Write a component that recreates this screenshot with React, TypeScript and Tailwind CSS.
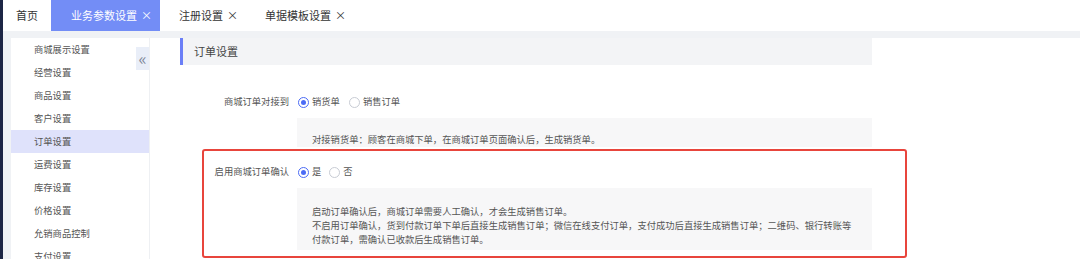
import React from 'react';

const menus = ['商城展示设置', '经营设置', '商品设置', '客户设置', '订单设置', '运费设置', '库存设置', '价格设置', '允销商品控制', '支付设置'];

const Radio: React.FC<{ checked?: boolean; label: string }> = ({ checked, label }) => (
  <span className="flex items-center gap-[3px]">
    <span
      className={`w-[11px] h-[11px] rounded-full flex items-center justify-center bg-white ${
        checked ? 'border-[1.5px] border-[#4b6bf5]' : 'border border-[#c8ccd4]'
      }`}
    >
      {checked && <span className="w-[5px] h-[5px] rounded-full bg-[#4b6bf5]" />}
    </span>
    <span className="text-[#555]">{label}</span>
  </span>
);

const App: React.FC = () => {
  return (
    <div
      className="w-[1080px] h-[259px] overflow-hidden flex bg-white"
      style={{ fontFamily: '"Noto Sans CJK SC", "Noto Sans", sans-serif' }}
    >
      <div className="w-[3px] bg-[#1d2645]" />
      <div className="flex-1 flex flex-col">
        {/* tabs */}
        <div className="h-[31px] flex items-stretch bg-white text-[11px] text-[#333] leading-none">
          <div className="px-[13px] flex items-center">首页</div>
          <div className="pl-[20px] pr-[8px] flex items-center gap-[4px] bg-[#738df6] text-white">
            <span>业务参数设置</span>
            <span className="text-[11px]">×</span>
          </div>
          <div className="pl-[19px] pr-[8px] flex items-center gap-[4px]">
            <span>注册设置</span>
            <span className="text-[11px]">×</span>
          </div>
          <div className="pl-[19px] pr-[8px] flex items-center gap-[4px]">
            <span>单据模板设置</span>
            <span className="text-[11px]">×</span>
          </div>
        </div>

        <div className="flex-1 bg-[#f0f2f5] pt-[7px] pl-[8px] flex min-h-0">
          {/* sidebar */}
          <div className="w-[139px] bg-white relative border-r border-[#eef0f3]">
            {menus.map((m) => (
              <div
                key={m}
                className={`h-[23px] pl-[23px] flex items-center text-[9.3px] text-[#555] ${
                  m === '订单设置' ? 'bg-[#dfe2fb]' : ''
                }`}
              >
                {m}
              </div>
            ))}
            <div className="absolute right-0 top-[9px] w-[13px] h-[23px] bg-[#e9eef8] flex items-center justify-center text-[#7d8699] text-[17px] leading-none pb-[2px]">
              «
            </div>
          </div>

          {/* main */}
          <div className="flex-1 bg-white relative flex flex-col text-[9.3px]">
            <div className="ml-[30px] w-[692px] h-[27px] bg-[#f3f4f6] border-l-[3px] border-[#6b7ff7] flex items-center pl-[11px] text-[11px] text-[#444]">
              订单设置
            </div>

            <div className="mt-[26px] h-[22px] flex items-center">
              <div className="w-[139px] text-right text-[#555]">商城订单对接到</div>
              <div className="ml-[9px] flex items-center gap-[9px]">
                <Radio checked label="销货单" />
                <Radio label="销售订单" />
              </div>
            </div>
            <div className="mt-[5px] ml-[147px] w-[575px] bg-[#f7f7f8] pt-[14px] pb-[1px] pl-[15px] leading-[14px] text-[#555]">
              对接销货单：顾客在商城下单，在商城订单页面确认后，生成销货单。
            </div>

            <div className="mt-[14px] h-[22px] flex items-center">
              <div className="w-[139px] text-right text-[#555]">启用商城订单确认</div>
              <div className="ml-[9px] flex items-center gap-[8px]">
                <Radio checked label="是" />
                <Radio label="否" />
              </div>
            </div>
            <div className="mt-[5px] ml-[147px] w-[575px] bg-[#f7f7f8] pt-[16px] pb-[4px] pl-[15px] leading-[14px] text-[#555]">
              <p>启动订单确认后，商城订单需要人工确认，才会生成销售订单。</p>
              <p>不启用订单确认，货到付款订单下单后直接生成销售订单；微信在线支付订单，支付成功后直接生成销售订单；二维码、银行转账等</p>
              <p>付款订单，需确认已收款后生成销售订单。</p>
            </div>

            {/* annotation */}
            <div className="absolute left-[52px] top-[111px] w-[705px] h-[109px] border-2 border-[#e8453c] rounded-[3px]" />
          </div>
        </div>
      </div>
    </div>
  );
};

export default App;
